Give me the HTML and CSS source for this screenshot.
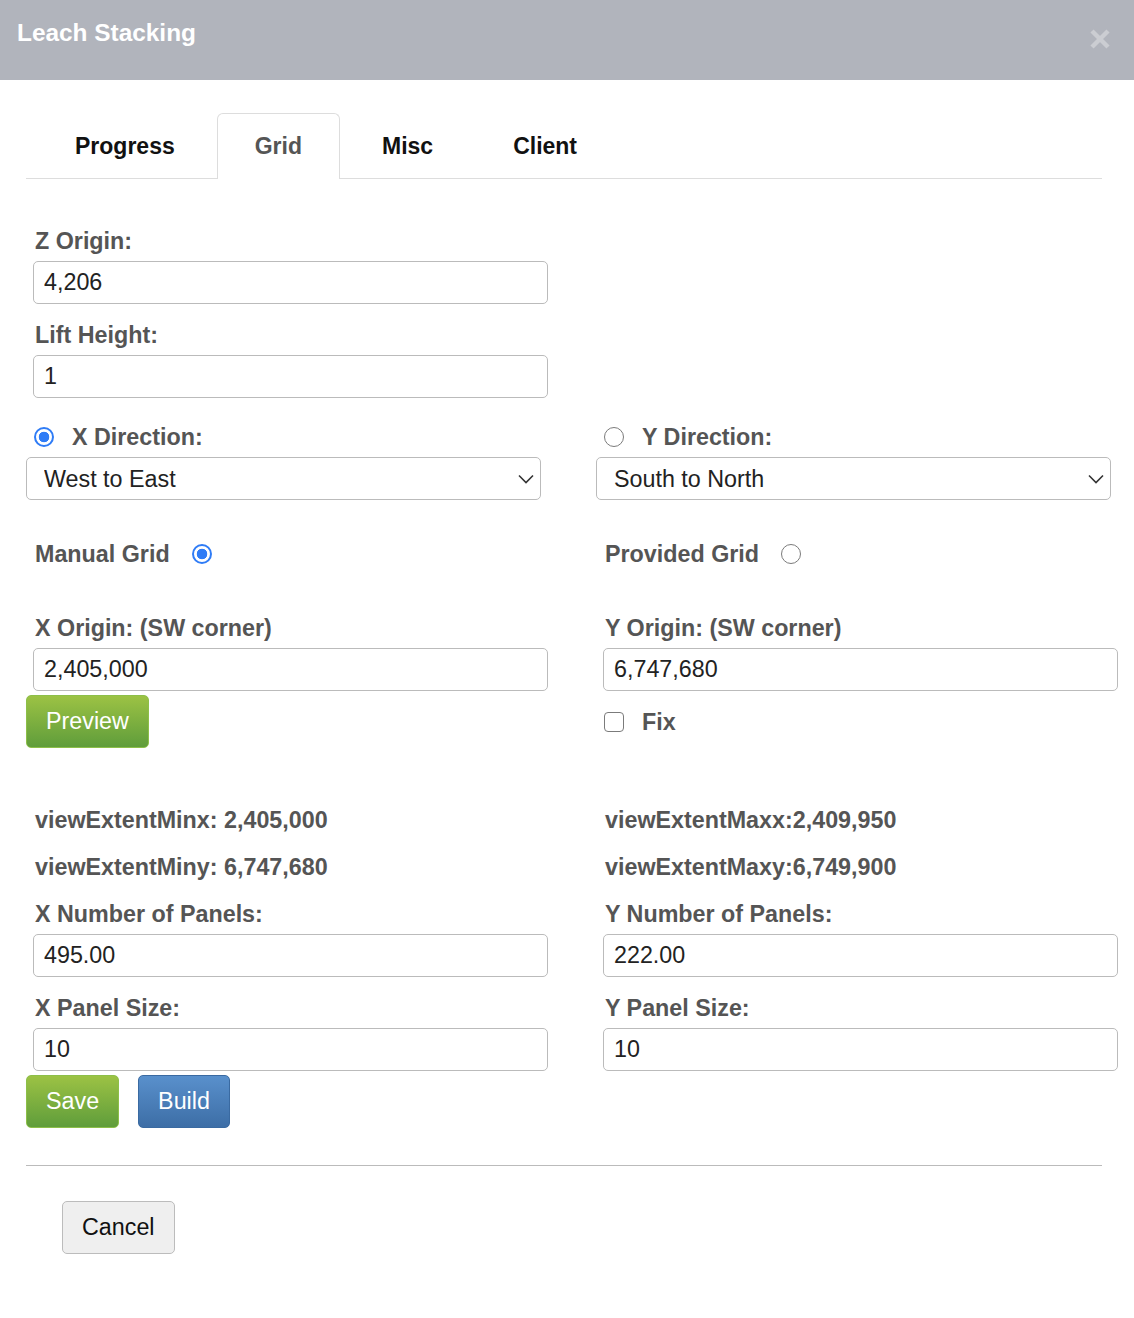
FILE: index.html
```html
<!DOCTYPE html>
<html lang="en">
<head>
  <meta charset="UTF-8">
  <title>Leach Stacking</title>
  <link rel="stylesheet" href="styles.css">
</head>
<body>

<div class="modal">
  <!-- Header -->
  <div class="modal-header">
    <h4>Leach Stacking</h4>
    <svg class="close" width="20" height="20" viewBox="0 0 20 20">
      <path d="M2 2 L18 18 M18 2 L2 18" stroke="#cbcdd2" stroke-width="4.5" fill="none"/>
    </svg>
  </div>

  <div class="modal-body">
    <ul class="tabs">
      <li>Progress</li>
      <li class="active">Grid</li>
      <li>Misc</li>
      <li>Client</li>
    </ul>

    <div class="form-rows">
      <div class="row r-z">
        <div class="col">
          <label>Z Origin:</label>
          <input type="text" class="field" value="4,206">
        </div>
      </div>

      <div class="row r-lift">
        <div class="col">
          <label>Lift Height:</label>
          <input type="text" class="field" value="1">
        </div>
      </div>

      <div class="row r-dir">
        <div class="col">
          <div class="check-line">
            <input type="radio" name="dir" class="radio" checked>
            <span>X Direction:</span>
          </div>
          <div class="select-wrap">
            <select class="select"><option>West to East</option></select>
            <svg class="chevron" width="16" height="10" viewBox="0 0 16 10"><path d="M1 1.5 L8 8.5 L15 1.5" stroke="#333" stroke-width="1.6" fill="none"/></svg>
          </div>
        </div>
        <div class="col">
          <div class="check-line">
            <input type="radio" name="dir" class="radio">
            <span>Y Direction:</span>
          </div>
          <div class="select-wrap">
            <select class="select"><option>South to North</option></select>
            <svg class="chevron" width="16" height="10" viewBox="0 0 16 10"><path d="M1 1.5 L8 8.5 L15 1.5" stroke="#333" stroke-width="1.6" fill="none"/></svg>
          </div>
        </div>
      </div>

      <div class="row r-gridtype">
        <div class="col">
          <div class="type-line">
            <span>Manual Grid</span>
            <input type="radio" name="gridtype" class="radio" checked>
          </div>
        </div>
        <div class="col">
          <div class="type-line">
            <span>Provided Grid</span>
            <input type="radio" name="gridtype" class="radio">
          </div>
        </div>
      </div>

      <div class="row r-origin">
        <div class="col">
          <label>X Origin: (SW corner)</label>
          <input type="text" class="field" value="2,405,000">
          <div class="actions">
            <button class="btn btn-green">Preview</button>
          </div>
        </div>
        <div class="col">
          <label>Y Origin: (SW corner)</label>
          <input type="text" class="field" value="6,747,680">
          <div class="actions">
            <div class="check-line">
              <input type="checkbox" class="checkbox">
              <span>Fix</span>
            </div>
          </div>
        </div>
      </div>

      <div class="row r-stats">
        <div class="col">
          <div class="stat">viewExtentMinx: 2,405,000</div>
          <div class="stat">viewExtentMiny: 6,747,680</div>
        </div>
        <div class="col">
          <div class="stat">viewExtentMaxx:2,409,950</div>
          <div class="stat">viewExtentMaxy:6,749,900</div>
        </div>
      </div>

      <div class="row r-panels">
        <div class="col">
          <label>X Number of Panels:</label>
          <input type="text" class="field" value="495.00">
        </div>
        <div class="col">
          <label>Y Number of Panels:</label>
          <input type="text" class="field" value="222.00">
        </div>
      </div>

      <div class="row r-size">
        <div class="col">
          <label>X Panel Size:</label>
          <input type="text" class="field" value="10">
          <div class="actions">
            <button class="btn btn-green">Save</button>
            <button class="btn btn-blue">Build</button>
          </div>
        </div>
        <div class="col">
          <label>Y Panel Size:</label>
          <input type="text" class="field" value="10">
        </div>
      </div>
    </div>

    <hr class="divider">

    <div class="modal-footer">
      <button class="btn btn-default">Cancel</button>
    </div>
  </div>
</div>

</body>
</html>
```

FILE: styles.css
```css
* {
  box-sizing: border-box;
}

body {
  margin: 0;
  background: #fff;
  font-family: "Liberation Sans", Arial, sans-serif;
  font-size: 23.3px;
  color: #222;
}

/* Header */
.modal-header {
  height: 80px;
  background: #b1b4bc;
  display: flex;
  justify-content: space-between;
  align-items: flex-start;
  padding: 19px 24px 0 17px;
}

.modal-header h4 {
  margin: 0;
  color: #fff;
  font-size: 24.4px;
  line-height: 28px;
  font-weight: bold;
}

.close {
  margin-top: 10px;
}

/* Body */
.modal-body {
  padding: 33px 32px 0 26px;
}

.tabs {
  list-style: none;
  margin: 0;
  padding: 0 0 0 11px;
  display: flex;
  gap: 4px;
  border-bottom: 1px solid #ddd;
}

.tabs li {
  padding: 0 37px;
  line-height: 64px;
  font-size: 23px;
  font-weight: bold;
  color: #111;
  border: 1px solid transparent;
  border-bottom: 0;
  border-radius: 6px 6px 0 0;
  margin-bottom: -1px;
  height: 66px;
}

.tabs li.active {
  color: #555;
  background: #fff;
  border-color: #ddd;
}

/* Form rows */
.row {
  display: grid;
  grid-template-columns: 540px 540px;
  column-gap: 30px;
}

.r-z { margin-top: 48px; }
.r-lift { margin-top: 17px; }
.r-dir { margin-top: 25px; }
.r-gridtype { margin-top: 40px; }
.r-origin { margin-top: 46px; }
.r-stats { margin-top: 58px; }
.r-panels { margin-top: 19px; }
.r-size { margin-top: 17px; }

label, .stat, .check-line span, .type-line span {
  font-weight: bold;
  color: #555;
  line-height: 28px;
}

label {
  display: block;
  margin: 0 0 6px 9px;
}

.stat {
  margin-left: 9px;
}

.stat + .stat {
  margin-top: 19px;
}

.field {
  display: block;
  margin-left: 7px;
  width: 515px;
  height: 43px;
  padding: 0 10px;
  border: 1px solid #bbb;
  border-radius: 5px;
  font-family: inherit;
  font-size: 23.3px;
  color: #222;
  background: #fff;
}

/* Radios and checkboxes */
.check-line {
  display: flex;
  align-items: center;
  height: 28px;
  padding-left: 8px;
}

.check-line span {
  margin-left: 18px;
}

.type-line {
  display: flex;
  align-items: center;
  height: 28px;
  padding-left: 9px;
}

.type-line .radio {
  margin-left: 22px;
}

.radio {
  appearance: none;
  -webkit-appearance: none;
  margin: 0;
  width: 20px;
  height: 20px;
  border-radius: 50%;
  border: 1.5px solid #7b7b7b;
  background: #fff;
  flex-shrink: 0;
}

.radio:checked {
  border: 2.5px solid #2f7cf6;
  background: radial-gradient(circle, #2f7cf6 0 5px, #fff 5.6px);
}

.checkbox {
  appearance: none;
  -webkit-appearance: none;
  margin: 0;
  width: 20px;
  height: 20px;
  border: 1.5px solid #7b7b7b;
  border-radius: 4px;
  background: #fff;
  flex-shrink: 0;
}

/* Selects */
.select-wrap {
  position: relative;
  margin-top: 6px;
  width: 515px;
}

.select {
  appearance: none;
  -webkit-appearance: none;
  display: block;
  width: 100%;
  height: 43px;
  padding: 0 40px 0 17px;
  border: 1px solid #bbb;
  border-radius: 5px;
  background: #fff;
  font-family: inherit;
  font-size: 23.3px;
  color: #222;
}

.chevron {
  position: absolute;
  right: 7px;
  top: 17px;
}

/* Buttons */
.actions {
  margin-top: 4px;
  height: 53px;
  display: flex;
  align-items: center;
  gap: 19px;
}

.btn {
  height: 53px;
  padding: 0 19px;
  border-radius: 5px;
  font-family: inherit;
  font-size: 23.3px;
  cursor: pointer;
}

.btn-green {
  color: #fff;
  background: linear-gradient(#9cc244, #5f9d3b);
  border: 1px solid #8dbf49;
}

.btn-blue {
  color: #fff;
  background: linear-gradient(#5990cc, #3d6ea6);
  border: 1px solid #3a6aa1;
}

.btn-default {
  color: #111;
  background: #efefef;
  border: 1px solid #bcbcbc;
}

.divider {
  margin: 37px 0 0;
  border: 0;
  border-top: 1px solid #bbb;
}

.modal-footer {
  padding: 35px 0 0 36px;
}
```
